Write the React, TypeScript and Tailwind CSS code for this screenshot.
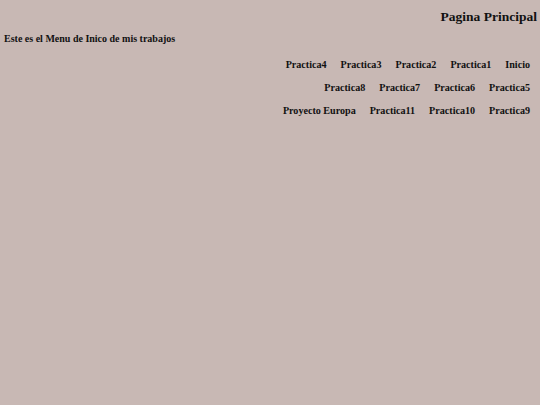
const rows = [
  ['Practica4', 'Practica3', 'Practica2', 'Practica1', 'Inicio'],
  ['Practica8', 'Practica7', 'Practica6', 'Practica5'],
  ['Proyecto Europa', 'Practica11', 'Practica10', 'Practica9'],
]

export default function App() {
  return (
    <div
      className="w-[540px] h-[405px] bg-[#c8b8b4] text-[#111] font-bold"
      style={{ fontFamily: '"Liberation Serif", serif' }}
    >
      <div className="flex justify-end pt-[8px] pr-[3px]">
        <h1 className="text-[13.5px] leading-[18px]">Pagina Principal</h1>
      </div>
      <p className="text-[10px] leading-[14px] pl-[4px] mt-[6px]">
        Este es el Menu de Inico de mis trabajos
      </p>
      <div className="flex flex-col items-end pr-[10px] mt-[12px] gap-[9px]">
        {rows.map((row, i) => (
          <div key={i} className="flex gap-[14px] text-[10.1px] leading-[14px]">
            {row.map((item) => (
              <a key={item} href="#">
                {item}
              </a>
            ))}
          </div>
        ))}
      </div>
    </div>
  )
}
